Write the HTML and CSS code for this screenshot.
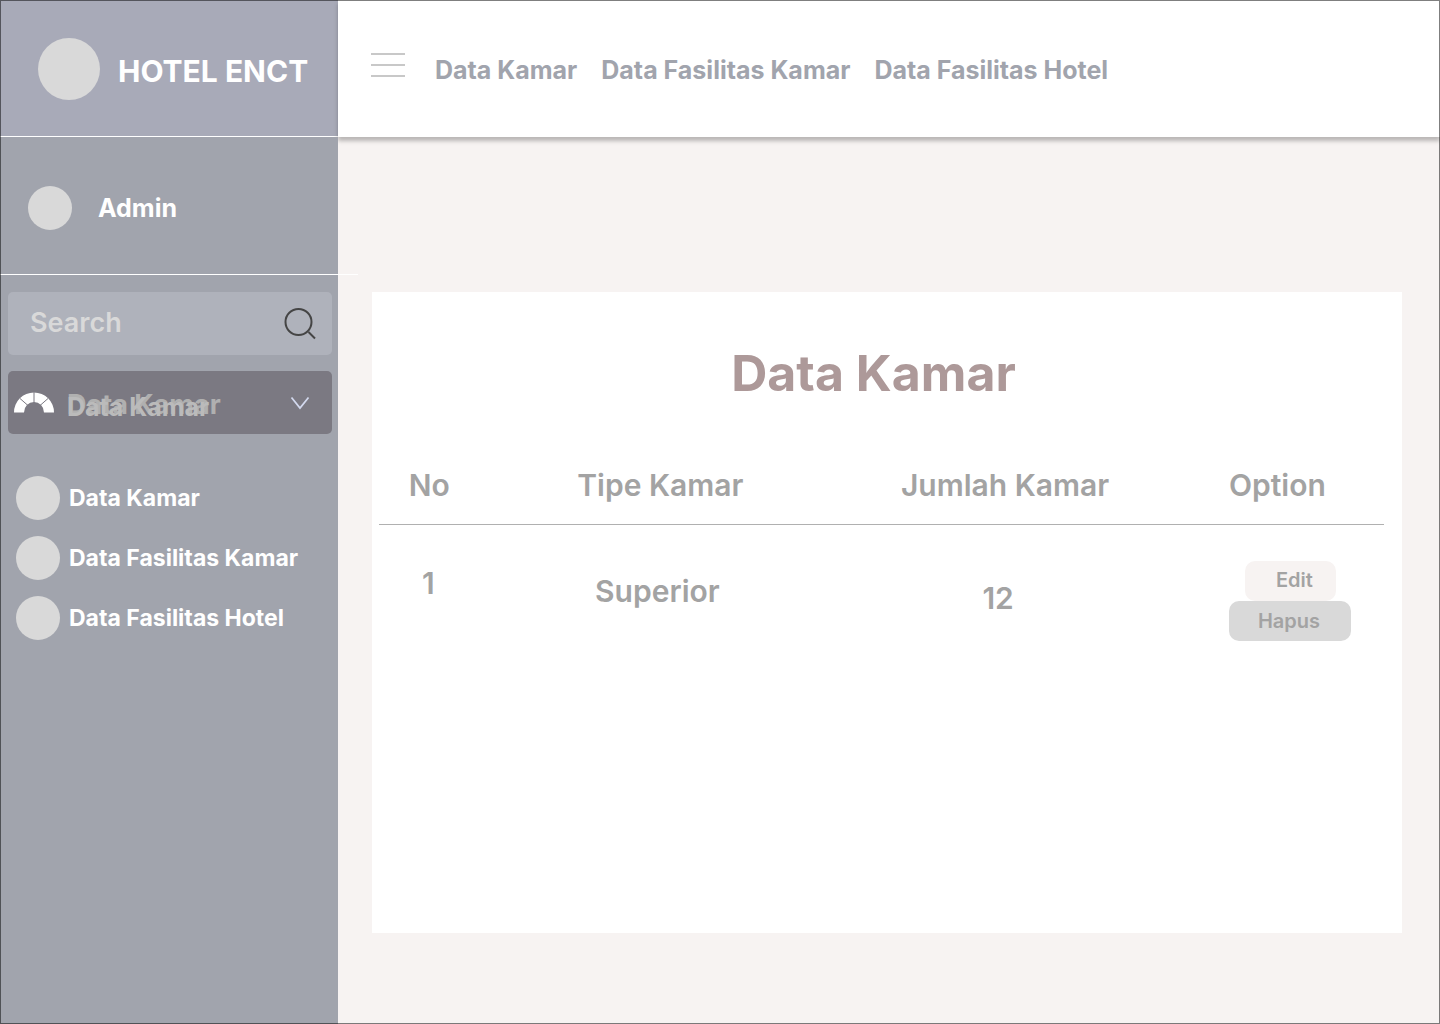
FILE: index.html
```html
<!DOCTYPE html>
<html lang="id">
<head>
  <meta charset="utf-8">
  <meta name="viewport" content="width=device-width, initial-scale=1">
  <title>Hotel ENCT - Data Kamar</title>
  <link rel="stylesheet" href="styles.css">
</head>
<body>
  <div class="app">
    <aside class="sidebar">
      <div class="brand">
        <span class="brand-logo"></span>
        <span class="brand-name">HOTEL ENCT</span>
      </div>
      <div class="profile">
        <span class="avatar"></span>
        <span class="profile-name">Admin</span>
      </div>
      <div class="tools">
        <form class="search" role="search">
          <input class="search-input" type="search" placeholder="Search" aria-label="Search">
          <button class="search-button" type="submit" aria-label="Search">
            <svg width="32" height="32" viewBox="0 0 32 32" fill="none" stroke="#454545" stroke-width="2">
              <circle cx="14.500" cy="14" r="13"/>
              <path d="M24.500 24L31 30.500"/>
            </svg>
          </button>
        </form>
        <button class="dropdown" type="button" aria-expanded="true">
          <svg class="gauge" width="40" height="21" viewBox="0 0 40 21">
            <path fill="#fff" d="M0 20.500A20 20 0 0 1 40 20.500H30A10 10.500 0 0 0 10 20.500Z"/>
            <path stroke="#7b7982" d="M20 0V11M6 6.500L14 13.500M34 6.500L26 13.500"/>
          </svg>
          <span class="dropdown-label">Data Kamar<span class="dropdown-current" aria-hidden="true">Data Kamar</span></span>
          <svg class="chevron" width="20" height="14" viewBox="0 0 20 14" fill="none" stroke="#d3d9ee" stroke-width="1.750">
            <path d="M1.500 1.500L10 12L18.500 1.500"/>
          </svg>
        </button>
      </div>
      <nav class="menu" aria-label="Data">
        <a class="menu-link" href="#kamar"><span class="avatar"></span>Data Kamar</a>
        <a class="menu-link" href="#fasilitas-kamar"><span class="avatar"></span>Data Fasilitas Kamar</a>
        <a class="menu-link" href="#fasilitas-hotel"><span class="avatar"></span>Data Fasilitas Hotel</a>
      </nav>
    </aside>
    <div class="content">
      <header class="topbar">
        <button class="hamburger" type="button" aria-label="Menu">
          <svg width="34" height="26" viewBox="0 0 34 26" stroke="#c8c8c8" stroke-width="2">
            <path d="M0 2H34M0 13H34M0 24H34"/>
          </svg>
        </button>
        <nav class="topnav" aria-label="Utama">
          <a href="#kamar">Data Kamar</a>
          <a href="#fasilitas-kamar">Data Fasilitas Kamar</a>
          <a href="#fasilitas-hotel">Data Fasilitas Hotel</a>
        </nav>
      </header>
      <main class="panel">
        <h1 class="panel-title">Data Kamar</h1>
        <table class="rooms">
          <thead>
            <tr>
              <th class="col-no" scope="col">No</th>
              <th class="col-type" scope="col">Tipe Kamar</th>
              <th class="col-count" scope="col">Jumlah Kamar</th>
              <th class="col-option" scope="col">Option</th>
            </tr>
          </thead>
          <tbody>
            <tr>
              <td class="cell-no">1</td>
              <td class="cell-type">Superior</td>
              <td class="cell-count">12</td>
              <td class="cell-option">
                <div class="actions">
                  <button class="action edit" type="button">Edit</button>
                  <button class="action delete" type="button">Hapus</button>
                </div>
              </td>
            </tr>
          </tbody>
        </table>
      </main>
    </div>
  </div>
</body>
</html>
```
FILE: styles.css
```css
* {
  box-sizing: border-box;
}

body {
  margin: 0;
  background: #f7f3f2;
  font-family: Inter, "Liberation Sans", sans-serif;
  font-weight: 600;
}

body::after {
  content: "";
  position: fixed;
  inset: 0;
  border: 1px solid rgba(0, 0, 0, 0.5);
  pointer-events: none;
}

a {
  color: inherit;
  text-decoration: none;
}

button,
input {
  margin: 0;
  padding: 0;
  border: 0;
  background: none;
  font: inherit;
}

button {
  cursor: pointer;
}

svg {
  display: block;
  flex: none;
}

.app {
  display: grid;
  grid-template-columns: 338px 1fr;
  min-height: 100vh;
}

.sidebar {
  background: #a1a4ad;
  color: #fff;
  font-weight: 700;
}

.brand {
  display: flex;
  align-items: center;
  gap: 18px;
  height: 137px;
  padding: 2px 0 0 38px;
  background: #a8aab8;
  border-bottom: 1px solid #fff;
}

.brand-logo {
  width: 62px;
  height: 62px;
  border-radius: 50%;
  background: #d9d9d9;
}

.brand-name {
  padding-top: 4px;
  font-size: 30px;
}

.avatar {
  flex: none;
  width: 44px;
  height: 44px;
  border-radius: 50%;
  background: #d9d9d9;
}

.profile {
  position: relative;
  display: flex;
  align-items: center;
  gap: 26px;
  height: 138px;
  padding: 4px 0 0 28px;
  background: #a1a4ad;
  font-size: 25px;
}

.profile::after {
  content: "";
  position: absolute;
  left: 0;
  right: -20px;
  bottom: 0;
  height: 1px;
  background: #fff;
}

.tools {
  display: grid;
  grid-template-columns: minmax(0, 1fr);
  gap: 16px;
  padding: 17px 6px 0 8px;
}

.search,
.dropdown {
  display: flex;
  align-items: center;
  height: 63px;
  border-radius: 5px;
}

.search {
  padding: 0 16px 2px 22px;
  background: #afb2bb;
}

.search-input {
  flex: 1;
  min-width: 0;
  color: #d9d9d9;
  font-size: 27px;
  font-weight: 600;
  outline: 0;
}

.search-input::placeholder {
  color: #d9d9d9;
  opacity: 1;
}

.search-button {
  padding-top: 2px;
}

.dropdown {
  width: 100%;
  padding: 0 22px 0 6px;
  background: #7b7982;
  color: #b0b0b0;
  text-align: left;
}

.dropdown-label {
  position: relative;
  flex: 1;
  margin-left: 13px;
  padding-top: 4px;
  font-size: 27px;
}

.dropdown-current {
  position: absolute;
  left: 0;
  top: 8px;
  color: #bbb;
  font-size: 25px;
}

.menu {
  display: grid;
  gap: 16px;
  padding: 42px 16px;
  font-size: 23px;
}

.menu-link {
  display: flex;
  align-items: center;
  gap: 9px;
}

.content {
  min-width: 0;
}

.topbar {
  display: flex;
  align-items: center;
  gap: 30px;
  height: 137px;
  padding: 0 33px;
  background: #fff;
  box-shadow: 0 4px 4px rgba(0, 0, 0, 0.25);
}

.hamburger {
  padding-bottom: 8px;
}

.topnav {
  display: flex;
  gap: 24px;
  padding-top: 2px;
  color: #a1a4ad;
  font-size: 25px;
  font-weight: 700;
}

.panel {
  min-height: 641px;
  margin: 155px 38px 91px 34px;
  padding: 50px 18px 40px 7px;
  background: #fff;
}

.panel-title {
  margin: 0;
  padding-right: 16px;
  color: #ad9999;
  font-size: 50px;
  font-weight: 700;
  line-height: 62px;
  text-align: center;
}

.rooms {
  width: 100%;
  margin-top: 42px;
  border-collapse: collapse;
  table-layout: fixed;
  color: #a3a3a3;
  font-size: 30px;
  line-height: 36px;
  text-align: center;
}

.rooms th {
  padding: 21px 0;
  border-bottom: 1px solid #b0b0b0;
  font-weight: 600;
}

.rooms td {
  padding: 36px 0 0;
  vertical-align: top;
}

.col-no {
  width: 10%;
}

.col-type {
  width: 36%;
}

.rooms .col-count {
  width: 33%;
  padding-right: 4px;
}

.rooms .col-option,
.rooms .cell-option {
  padding-left: 56px;
  text-align: left;
}

.rooms .cell-no {
  padding: 40px 2px 0 0;
}

.rooms .cell-type {
  padding: 48px 6px 0 0;
}

.rooms .cell-count {
  padding: 55px 18px 0 0;
}

.actions {
  display: flex;
  flex-direction: column;
  align-items: flex-start;
}

.action {
  height: 40px;
  border-radius: 10px;
  color: #a3a3a3;
  font-size: 20px;
}

.edit {
  margin-left: 16px;
  padding: 0 23px 2px 31px;
  background: #f7f3f2;
}

.delete {
  padding: 0 31px 0 29px;
  background: #d9d9d9;
}
```
